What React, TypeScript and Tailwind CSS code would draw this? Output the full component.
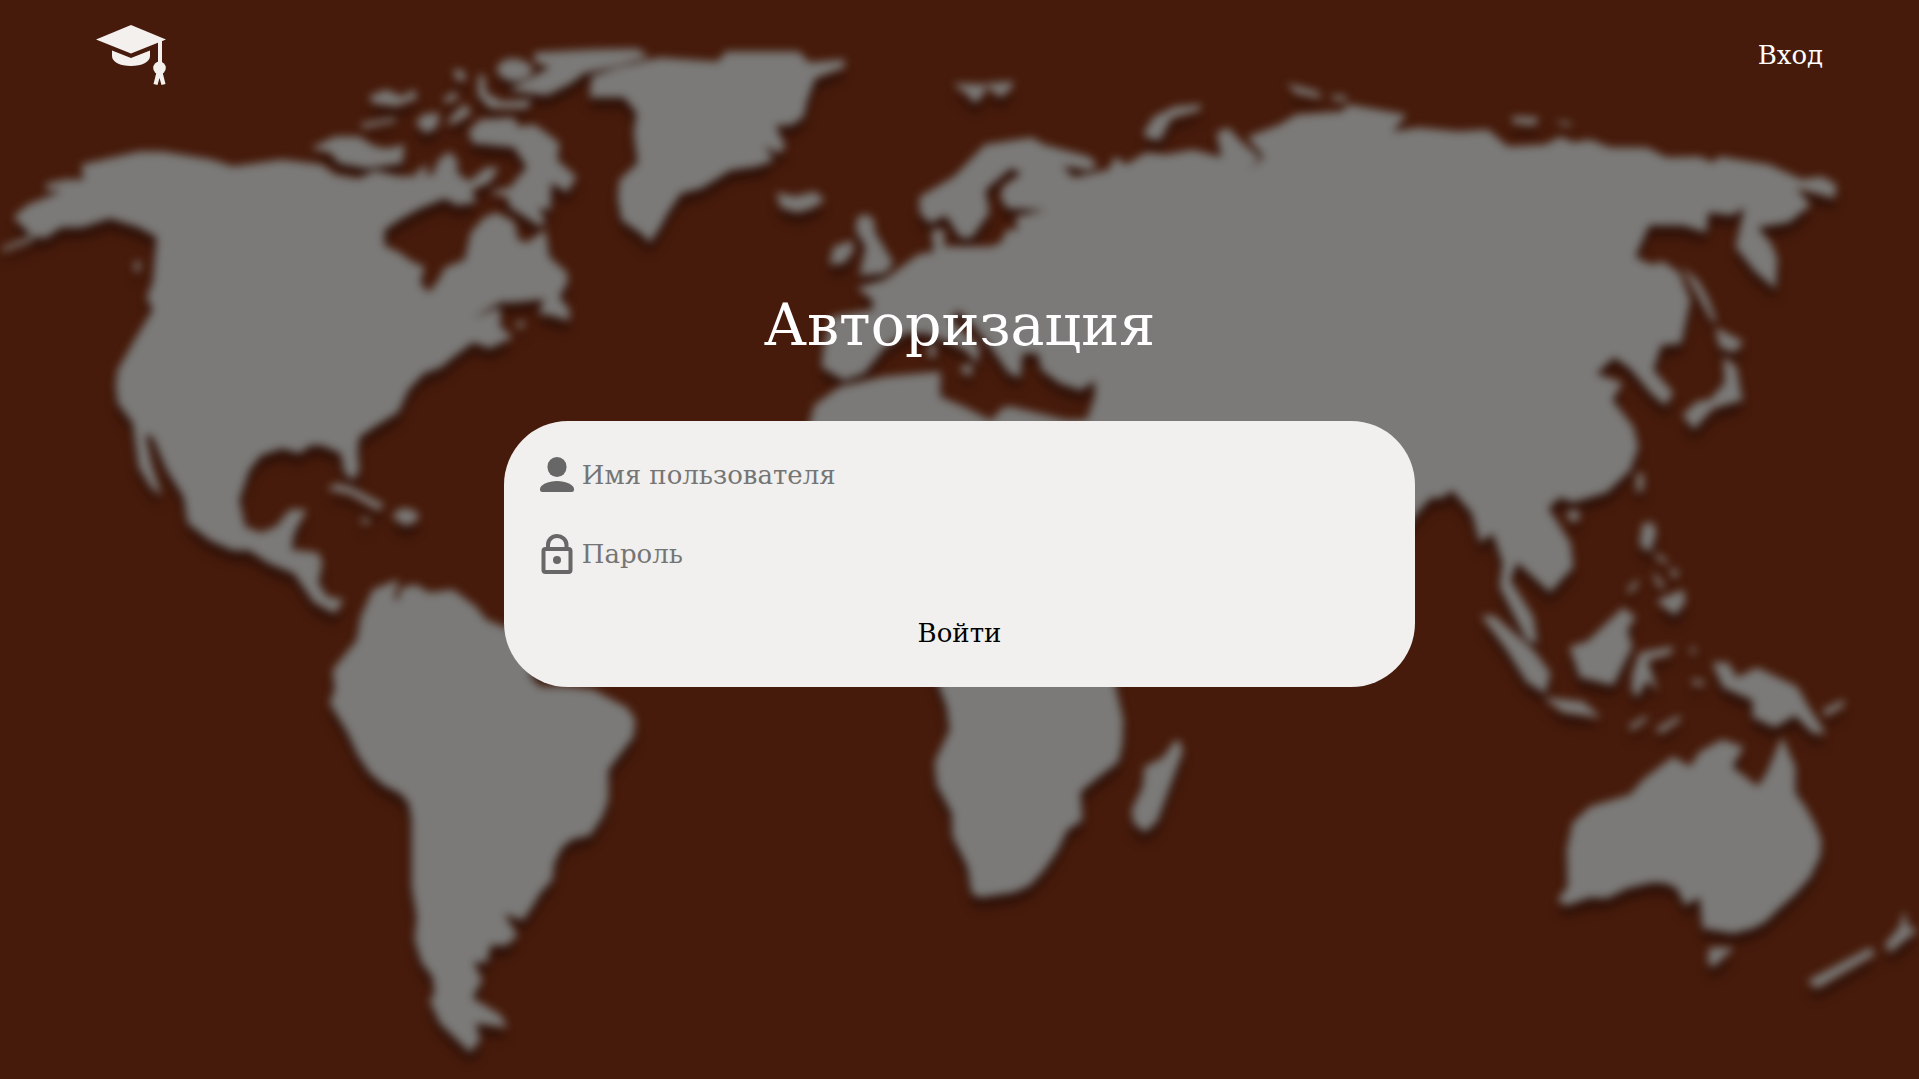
import React, { useState } from "react";

const LAND: string[] = [
  // North and Central America
  "M14 217L28 205L41 200L53 195L63 189L46 190L47 184L65 180L84 180L82 165L108 159L139 152L163 152L212 160L233 167L282 160L322 165L335 175L359 179L375 171L400 177L433 175L439 160L449 152L457 160L457 173L469 182L486 168L498 168L490 182L471 190L476 202L457 205L445 198L420 208L400 219L384 230L384 246L398 252L412 262L424 267L420 283L429 293L439 280L445 268L465 260L471 233L484 218L496 213L514 222L518 240L527 243L545 230L549 257L567 273L567 283L559 297L569 310L569 320L551 315L539 313L545 299L514 302L500 302L469 320L500 308L500 327L512 337L490 348L473 342L453 357L441 367L424 373L408 390L398 412L375 426L359 437L357 452L359 470L353 480L345 473L341 453L322 445L310 445L300 453L282 448L261 455L249 470L239 500L245 527L261 533L276 527L290 510L306 510L294 533L291 550L318 553L322 563L318 583L327 597L343 600L335 613L314 602L294 573L269 563L249 550L233 550L210 540L188 523L184 497L167 470L153 437L145 433L151 463L161 495L151 487L139 467L133 423L118 403L116 385L118 370L135 340L147 320L153 310L147 297L153 283L157 237L139 227L110 218L82 227L61 227L45 238L31 235Z",
  "M2 248L32 236L34 240L3 251Z",
  "M135 262L140 262L139 271L135 271Z",
  // Canadian Arctic
  "M312 148L335 137L359 137L375 147L388 149L404 145L402 163L367 168L339 163L330 152Z",
  "M369 97L386 90L402 97L414 90L417 98L396 106L374 103Z",
  "M361 124L394 118L396 121L363 128Z",
  "M416 123L423 115L439 113L437 127L426 133Z",
  "M443 99L455 92L458 98L447 103Z",
  "M453 70L463 71L466 79L458 81Z",
  "M447 124L453 115L465 104L471 113L457 122Z",
  "M479 75L484 76L486 93L502 102L531 100L527 108L490 108L478 95Z",
  "M497 69Q500 59 514 59Q527 60 533 69Q528 81 514 81Q500 80 497 69Z",
  "M535 53L592 50L637 49L648 56L612 67L584 73L571 83L547 95L510 90L535 76L551 67L535 62Z",
  "M469 131L480 120L514 118L518 127L535 125L559 143L557 160L576 177L567 192L551 182L550 210L538 207L545 222L540 226L510 207L508 197L490 192L510 188L527 167L514 147L473 143Z",
  "M416 172L428 165L426 173L418 177Z",
  "M517 323L523 321L524 326L518 328Z",
  // Greenland, Iceland and Svalbard
  "M590 97L592 77L620 67L660 58L718 62L726 52L799 52L809 63L844 60L844 67L815 78L807 100L803 117L791 125L775 125L785 147L779 153L764 145L773 160L758 166L730 170L716 179L701 188L681 193L668 212L660 227L650 242L641 233L622 220L618 198L620 180L638 163L634 133L637 113L624 97Z",
  "M777 193L795 197L815 192L824 200L812 208L797 212L781 207Z",
  "M954 84L987 85L982 96L975 103L966 93Z",
  "M987 84L1013 82L1011 88L1001 97L991 90Z",
  // Caribbean
  "M328 489L336 484L350 487L384 505L378 510L350 494Z",
  "M393 517Q397 508 406 509Q416 510 419 517Q412 525 405 525Z",
  "M361 519L369 519L369 523L363 523Z",
  // South America
  "M540 640L506 628L486 620L476 607L453 590L429 593L416 585L402 588L398 602L394 597L398 580L373 590L361 617L357 640L333 670L335 690L330 703L348 733L358 755L370 773L384 785L400 793L409 803L412 820L412 887L417 917L415 940L422 963L433 977L435 994L430 1000L440 1023L470 1052L480 1040L475 1023L507 1027L500 1015L472 998L482 980L473 962L487 962L490 945L507 945L517 935L503 913L523 920L533 905L540 893L552 880L554 863L562 847L572 839L590 835L602 817L608 800L608 770L620 754L633 737L635 720L627 708L608 698L593 690L567 687L540 687L527 672L580 670Z",
  // British Isles
  "M830 264L834 247L852 241L853 251L844 263Z",
  "M858 217L866 215L873 219L875 233L893 263L885 273L860 275L866 247L856 230Z",
  // Eurasia
  "M822 367L824 347L832 317L873 310L873 300L858 288L885 280L918 255L934 252L932 230L944 230L944 247L991 247L1001 243L1007 230L1018 230L1016 217L1048 210L1007 208L1001 197L1003 187L1022 173L1011 168L985 190L989 213L971 238L960 237L946 215L930 223L920 213L920 197L954 177L985 145L1032 138L1044 145L1089 157L1097 165L1089 170L1062 165L1073 178L1109 170L1115 157L1126 165L1146 153L1166 155L1193 150L1222 158L1217 133L1228 128L1242 143L1259 157L1248 172L1264 157L1248 137L1280 125L1296 115L1341 112L1349 105L1406 115L1392 132L1419 128L1459 132L1488 130L1508 147L1545 145L1561 137L1573 143L1590 140L1610 148L1647 148L1667 158L1700 157L1712 163L1720 157L1769 165L1802 180L1822 177L1836 185L1834 198L1795 187L1810 205L1789 222L1757 227L1771 244L1777 259L1775 288L1755 271L1736 247L1745 207L1732 215L1708 212L1706 232L1683 225L1649 225L1635 257L1651 265L1663 262L1679 273L1690 300L1681 343L1661 345L1653 370L1673 393L1665 405L1651 393L1630 368L1614 357L1596 374L1622 383L1612 400L1633 427L1638 447L1630 470L1607 492L1573 502L1560 497L1548 508L1570 543L1573 567L1550 592L1517 562L1510 580L1533 617L1537 643L1527 640L1500 587L1503 563L1493 533L1480 542L1472 513L1452 490L1443 497L1430 498L1417 513L1380 560L1320 500L1200 480L1060 500L1060 421L1087 420L1095 397L1095 380L1081 390L1060 383L1042 370L1038 353L1022 353L1020 377L1009 373L991 347L975 327L958 310L950 320L979 347L977 363L966 350L950 342L926 333L905 333L885 347L864 373L844 380Z",
  "M962 366L972 365L971 375L962 372Z",
  "M929 345L935 345L935 357L929 357Z",
  // Arctic Ocean islands
  "M1144 133L1154 117L1175 107L1201 105L1199 110L1171 118L1160 140L1148 138Z",
  "M1288 84L1318 92L1321 98L1296 93Z",
  "M1331 96L1344 96L1348 101L1334 100Z",
  "M1512 117L1538 118L1535 125L1514 123Z",
  "M1558 121L1572 124L1570 126L1560 124Z",
  // Africa
  "M805 440L815 405L840 387L885 377L940 372L940 397L966 408L991 421L1003 408L1011 407L1044 415L1072 422L1115 620L1115 686L1123 720L1122 745L1118 762L1097 778L1080 792L1082 820L1067 830L1057 851L1043 871L1030 885L1014 892L980 897L972 893L968 867L953 837L952 813L937 785L935 762L950 730L947 707L937 680L900 600L810 560Z",
  "M1176 740L1181 744L1182 753L1157 821L1145 832L1134 823L1132 810L1143 787L1145 767L1163 758Z",
  // Japan and Sakhalin
  "M1683 268L1698 281L1708 299L1716 321L1712 321Z",
  "M1716 328L1743 342L1734 352L1720 347Z",
  "M1724 357L1736 367L1742 400L1713 408L1694 429L1683 415L1697 402L1710 400L1725 383Z",
  // South-East Asia
  "M1637 474L1643 474L1643 490L1637 492Z",
  "M1566 513L1575 510L1581 515L1573 523Z",
  "M1643 524L1653 523L1656 533L1650 552L1640 545Z",
  "M1657 553L1668 562L1665 564L1656 557Z",
  "M1672 568L1678 572L1676 578L1671 575Z",
  "M1653 572L1662 582L1664 590L1657 584Z",
  "M1627 590L1637 580L1638 584L1630 593Z",
  "M1683 590L1685 602L1675 615L1657 601Z",
  "M1570 647L1587 642L1623 608L1635 617L1627 630L1632 647L1613 685L1580 677Z",
  "M1482 616L1494 616L1533 650L1550 673L1545 693L1527 682L1507 650Z",
  "M1545 698L1583 702L1600 717L1563 712Z",
  "M1633 673L1640 653L1673 647L1670 654L1647 660L1657 690L1647 680L1637 697L1632 690Z",
  "M1656 729L1679 716L1680 720L1661 733Z",
  "M1629 726L1646 716L1646 720L1632 730Z",
  "M1692 680L1703 681L1704 685L1693 684Z",
  "M1691 648L1695 648L1695 653L1691 653Z",
  "M1713 663L1728 663L1737 678L1757 668L1797 687L1810 710L1825 733L1813 733L1795 715L1775 727L1753 717L1753 700L1723 687Z",
  "M1823 710L1844 700L1843 706L1826 716Z",
  // Australia and New Zealand
  "M1558 900L1568 887L1567 850L1573 823L1590 807L1630 795L1643 780L1673 757L1690 767L1700 752L1722 740L1743 747L1732 767L1758 787L1767 773L1782 738L1795 767L1795 793L1805 807L1814 823L1821 840L1820 856L1810 877L1795 894L1777 910L1766 921L1753 928L1733 933L1703 928L1700 897L1685 905L1677 888L1666 883L1653 882L1627 888L1607 898L1590 897L1567 905Z",
  "M1710 948L1733 948L1713 967L1708 962Z",
  "M1808 981L1870 948L1875 954L1817 988Z",
  "M1885 945L1900 927L1904 912L1908 927L1917 930L1890 952Z",
];

function WorldMap() {
  return (
    <svg
      aria-hidden="true"
      className="absolute inset-0 -z-10 h-full w-full"
      viewBox="0 0 1919 1079"
      preserveAspectRatio="xMidYMid slice"
    >
      <defs>
        <filter id="land-blur" x="-5%" y="-5%" width="110%" height="110%" colorInterpolationFilters="sRGB">
          <feGaussianBlur stdDeviation="4" />
        </filter>
        <filter id="shadow-blur" x="-5%" y="-5%" width="110%" height="110%" colorInterpolationFilters="sRGB">
          <feGaussianBlur stdDeviation="6" />
        </filter>
      </defs>
      <path d={LAND.join("")} transform="translate(0 11)" fill="#250c06" opacity="0.8" filter="url(#shadow-blur)" />
      <path d={LAND.join("")} fill="#7b7a78" stroke="#7b7a78" strokeWidth="1" strokeLinejoin="round" filter="url(#land-blur)" />
    </svg>
  );
}

function GraduationCap() {
  return (
    <svg viewBox="0 0 70 60" className="h-15 w-[70px]" fill="#f3f0ee" aria-hidden="true">
      <path d="M35 0L70 14.500L35 28.500L0 14.500Z" />
      <path d="M16 25.500L35 33L54 25.500V31C54 37 46 41 35 41S16 37 16 31Z" />
      <path d="M62 15H66V38H62Z" />
      <ellipse cx="63.500" cy="43" rx="6.300" ry="6.500" />
      <path d="M60.500 47L57.500 59L61.500 60L63.500 53L65.500 60L69.500 59L66.500 47Z" />
    </svg>
  );
}

function PersonIcon() {
  return (
    <svg viewBox="0 0 34 40" className="h-10 w-[34px] shrink-0" fill="#676767" aria-hidden="true">
      <rect x="7.500" y="2" width="19" height="20" rx="9.500" />
      <path d="M0 34C0 30 8 26 17 26S34 30 34 34V34.500Q34 37 31.500 37H2.500Q0 37 0 34.500Z" />
    </svg>
  );
}

function LockIcon() {
  return (
    <svg viewBox="0 0 34 40" className="h-10 w-[34px] shrink-0" fill="none" stroke="#676767" aria-hidden="true">
      <rect x="3.500" y="15" width="27" height="23" rx="2" strokeWidth="4" />
      <path d="M8 14V11C8 5.500 12 2 17 2S26.500 5.500 26.500 11V14" strokeWidth="4" />
      <circle cx="17" cy="26" r="4" fill="#676767" stroke="none" />
    </svg>
  );
}

type FieldProps = {
  id: string;
  label: string;
  type: string;
  autoComplete: string;
  icon: React.ReactNode;
  value: string;
  onChange: (value: string) => void;
};

function Field({ id, label, type, autoComplete, icon, value, onChange }: FieldProps) {
  return (
    <div className="flex h-10 items-center gap-2">
      <label htmlFor={id} aria-label={label}>
        {icon}
      </label>
      <input
        id={id}
        type={type}
        autoComplete={autoComplete}
        placeholder={label}
        value={value}
        onChange={(e) => onChange(e.target.value)}
        className="h-10 min-w-0 flex-1 bg-transparent text-[#333333] outline-none placeholder:text-[#757575]"
      />
    </div>
  );
}

export default function App() {
  const [username, setUsername] = useState("");
  const [password, setPassword] = useState("");

  return (
    <div className="relative isolate flex min-h-screen flex-col overflow-hidden bg-[#461b0b] font-['DejaVu_Serif',serif] text-[26px] leading-10 text-white">
      <WorldMap />
      <header className="flex items-center justify-between px-[5%] pt-[25px] pb-6">
        <a href="#" aria-label="Главная">
          <GraduationCap />
        </a>
        <a href="#login">Вход</a>
      </header>
      <main id="login" className="flex flex-col items-center pt-46">
        <h1 className="text-[57px] leading-16">Авторизация</h1>
        <form
          onSubmit={(e) => e.preventDefault()}
          className="mt-16 flex w-[47.5%] flex-col gap-[39px] rounded-[64px] bg-[#f1f0ee] px-9 py-[34px]"
        >
          <Field id="username" label="Имя пользователя" type="text" autoComplete="username" icon={<PersonIcon />} value={username} onChange={setUsername} />
          <Field id="password" label="Пароль" type="password" autoComplete="current-password" icon={<LockIcon />} value={password} onChange={setPassword} />
          <button type="submit" className="cursor-pointer self-center text-black">
            Войти
          </button>
        </form>
      </main>
    </div>
  );
}
